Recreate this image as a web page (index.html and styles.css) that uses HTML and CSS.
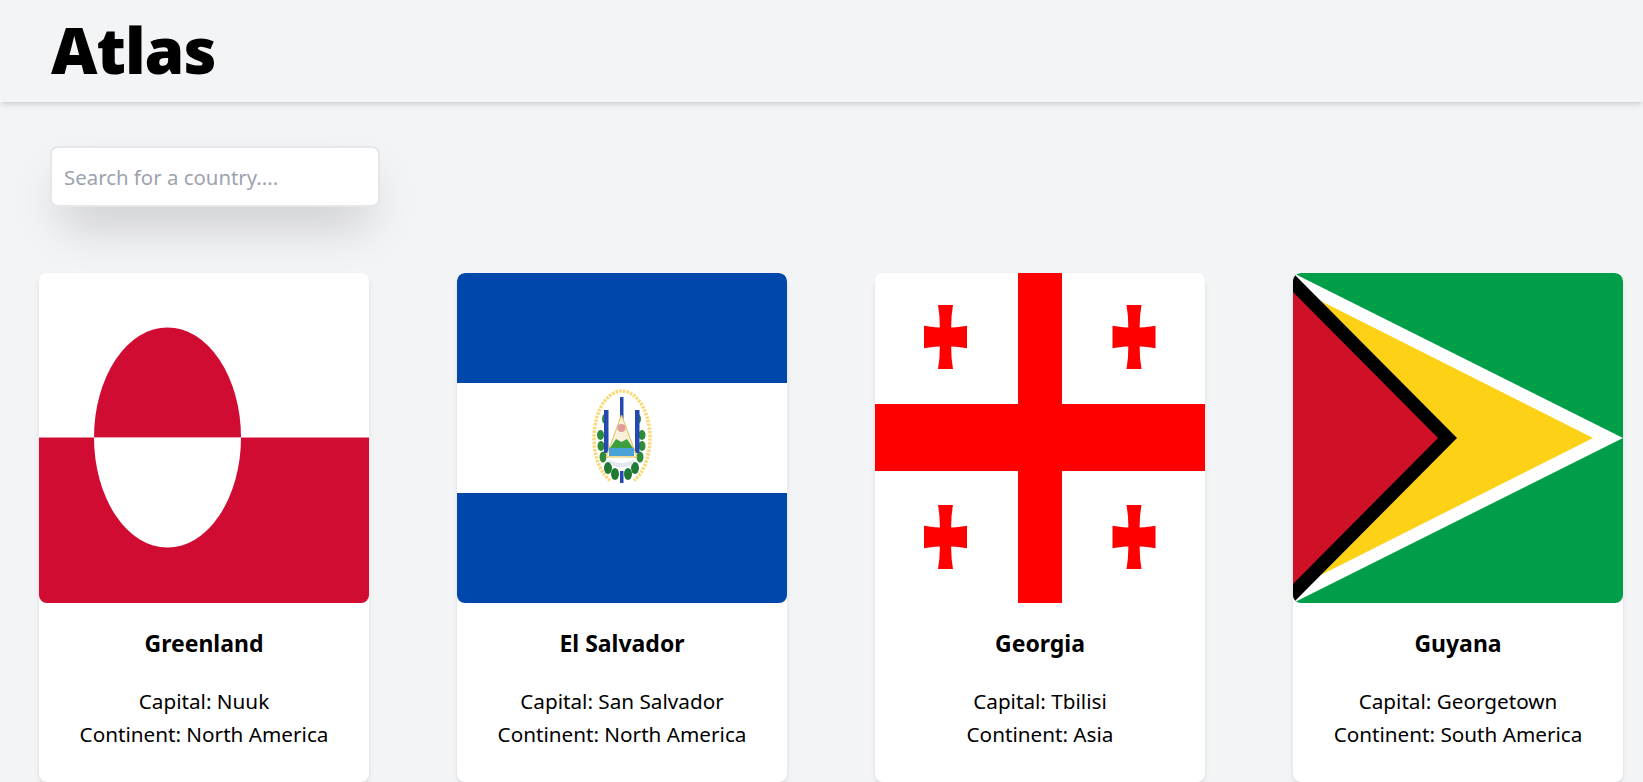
FILE: index.html
```html
<!doctype html>
<html>
  <head>
    <title>Atlas</title>
    <link rel="stylesheet" href="styles.css">
  </head>
  <body>
    <header class="topbar">
      <h1 class="logo">Atlas</h1>
    </header>
    <div class="search-wrap">
      <input class="search" type="text" placeholder="Search for a country....">
    </div>
    <main class="countries">
      <div class="card">
        <svg class="flag" viewBox="0 0 330 330">
          <rect width="330" height="330" fill="#fff"/>
          <g class="soft">
            <rect x="-5" y="164.500" width="340" height="170" fill="#d00c33"/>
            <path d="M55 164.500a73.500 110 0 0 1 147 0z" fill="#d00c33"/>
            <path d="M55 164.500a73.500 110 0 0 0 147 0z" fill="#fff"/>
          </g>
        </svg>
        <div class="info">
          <h2 class="name">Greenland</h2>
          <p class="line">Capital: Nuuk</p>
          <p class="line">Continent: North America</p>
        </div>
      </div>
      <div class="card">
        <svg class="flag" viewBox="0 0 330 330">
          <rect width="330" height="330" fill="#0047ab"/>
          <g class="soft">
            <rect x="-5" y="110" width="340" height="110" fill="#fff"/>
          </g>
          <!-- coat of arms -->
          <g class="arms">
            <path d="M153 207.500A28 47 0 1 1 177 207.500" fill="none" stroke="#fbd976" stroke-width="3.500" stroke-dasharray="2.500 1.200"/>
            <ellipse cx="148" cy="146" rx="3" ry="5" fill="#2e8b3a"/>
            <ellipse cx="181" cy="146" rx="3" ry="5" fill="#2e8b3a"/>
            <ellipse cx="143.500" cy="162" rx="3.500" ry="5" fill="#2e8b3a"/>
            <ellipse cx="185" cy="162" rx="3.500" ry="5" fill="#2e8b3a"/>
            <ellipse cx="144" cy="173" rx="3.500" ry="5" fill="#2e8b3a"/>
            <ellipse cx="185" cy="173" rx="3.500" ry="5" fill="#2e8b3a"/>
            <ellipse cx="146" cy="184" rx="3.500" ry="5.500" fill="#2e8b3a"/>
            <ellipse cx="183" cy="184" rx="3.500" ry="5.500" fill="#2e8b3a"/>
            <ellipse cx="151" cy="195" rx="4" ry="6" fill="#1f7a34"/>
            <ellipse cx="178" cy="195" rx="4" ry="6" fill="#1f7a34"/>
            <ellipse cx="158" cy="201" rx="4" ry="6" fill="#1f7a34"/>
            <ellipse cx="171" cy="201" rx="4" ry="6" fill="#1f7a34"/>
            <rect x="147" y="137" width="4.500" height="43" fill="#2449b0"/>
            <rect x="178" y="137" width="4.500" height="43" fill="#2449b0"/>
            <rect x="163" y="124" width="3.500" height="22" fill="#2449b0"/>
            <path d="M164.500 142l15.500 42h-31z" fill="#f8f1dc" stroke="#e3c04a"/>
            <circle cx="164.500" cy="155" r="4" fill="#e39a9a"/>
            <path d="M153 175l6-9 5.500 3 5.500-3 6 9z" fill="#3d9f3f"/>
            <rect x="152" y="175" width="25" height="8" fill="#4aa3d8"/>
            <path d="M151 186q13.500 8 27 0l-3 6q-10.500 5-21 0z" fill="#e3e8f0"/>
            <rect x="163" y="198" width="3.500" height="12" fill="#2449b0"/>
          </g>
        </svg>
        <div class="info">
          <h2 class="name">El Salvador</h2>
          <p class="line">Capital: San Salvador</p>
          <p class="line">Continent: North America</p>
        </div>
      </div>
      <div class="card">
        <svg class="flag" viewBox="0 0 330 330">
          <defs>
            <path id="bolnur" d="M-7.500 -32.500h15q-2 11-1.800 22.500 10-.5 15.800-1.800v22.600q-6-1.300-15.800-1.800-.2 11.500 1.800 22.500h-15q2-11 1.800-22.500-10 .5-15.800 1.800v-22.600q6 1.300 15.800 1.800.2-11.500-1.800-22.500z" fill="#f00"/>
          </defs>
          <rect width="330" height="330" fill="#fff"/>
          <g class="soft">
            <rect x="143" y="-5" width="44" height="340" fill="#f00"/>
            <rect x="-5" y="131" width="340" height="67" fill="#f00"/>
            <use href="#bolnur" x="70.500" y="64.500"/>
            <use href="#bolnur" x="259" y="64.500"/>
            <use href="#bolnur" x="70.500" y="264.500"/>
            <use href="#bolnur" x="259" y="264.500"/>
          </g>
        </svg>
        <div class="info">
          <h2 class="name">Georgia</h2>
          <p class="line">Capital: Tbilisi</p>
          <p class="line">Continent: Asia</p>
        </div>
      </div>
      <div class="card">
        <svg class="flag" viewBox="0 0 330 330">
          <rect width="330" height="330" fill="#009e49"/>
          <g class="soft">
            <path d="M0 0L330 165 0 330z" fill="#fff"/>
            <path d="M0 14L300 165 0 316z" fill="#fcd116"/>
            <path d="M0 0L164 165 0 330z" fill="#000"/>
            <path d="M-5 14L145 165 -5 316z" fill="#ce1126"/>
          </g>
        </svg>
        <div class="info">
          <h2 class="name">Guyana</h2>
          <p class="line">Capital: Georgetown</p>
          <p class="line">Continent: South America</p>
        </div>
      </div>
    </main>
  </body>
</html>
```

FILE: styles.css
```css
html {
  overflow: hidden;
}

body {
  margin: 0;
  background-color: #f3f4f6;
  color: #000;
  font-family: "Noto Sans", sans-serif;
}

.topbar {
  height: 102px;
  padding-left: 51px;
  box-sizing: border-box;
  background-color: #f3f4f6;
  box-shadow: 0 4px 6px -1px rgba(0, 0, 0, 0.1), 0 2px 4px -2px rgba(0, 0, 0, 0.1);
}

.logo {
  margin: 0;
  font-size: 64px;
  line-height: 100px;
  font-weight: 900;
  letter-spacing: -1px;
}

.search-wrap {
  padding: 44px 0 0 50px;
}

.search {
  display: block;
  width: 330px;
  height: 61px;
  box-sizing: border-box;
  padding: 0 12px;
  background-color: #fff;
  border: 2px solid #e5e7eb;
  border-radius: 8px;
  outline: none;
  font-family: "Noto Sans", sans-serif;
  font-size: 20.4px;
  box-shadow: 0 25px 50px -12px rgba(0, 0, 0, 0.22);
}

.search::placeholder {
  color: #9ca3af;
}

.countries {
  display: grid;
  grid-template-columns: repeat(4, 330px);
  column-gap: 88px;
  padding: 66px 0 0 39px;
}

.card {
  height: 509px;
  background-color: #fff;
  border-radius: 8px;
  overflow: hidden;
  box-shadow: 0 4px 6px -1px rgba(0, 0, 0, 0.1), 0 2px 4px -2px rgba(0, 0, 0, 0.1);
  text-align: center;
}

.flag {
  display: block;
  width: 330px;
  height: 330px;
  border-radius: 8px;
}

.soft {
  filter: blur(0.4px);
}

.arms {
  filter: blur(0.5px);
}

.info {
  padding-top: 24px;
}

.name {
  margin: 0 0 26px;
  font-size: 23px;
  line-height: 32px;
  font-weight: 700;
}

.line {
  margin: 0;
  font-size: 20.7px;
  line-height: 33px;
}
```
